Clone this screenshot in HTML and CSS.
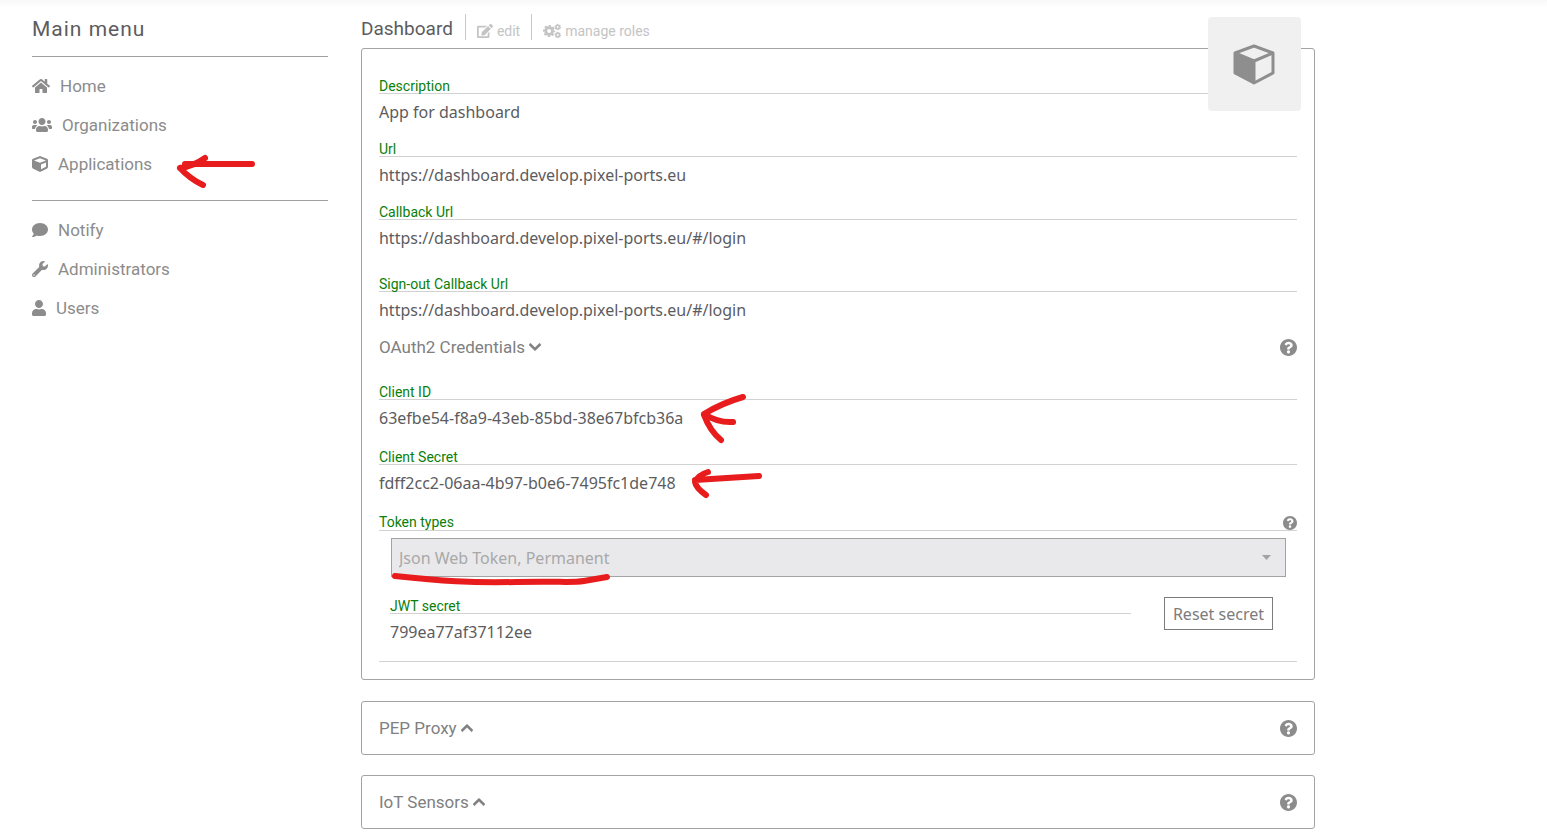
FILE: index.html
```html
<!DOCTYPE html>
<html lang="en">
<head>
<meta charset="utf-8">
<title>Dashboard</title>
<link rel="stylesheet" href="styles.css">
</head>
<body>
<svg class="sprite" aria-hidden="true">
  <symbol id="home" viewBox="0 0 576 512"><path d="M280.37 148.26L96 300.11V464a16 16 0 0 0 16 16l112.06-.29a16 16 0 0 0 15.92-16V368a16 16 0 0 1 16-16h64a16 16 0 0 1 16 16v95.64a16 16 0 0 0 16 16.05L464 480a16 16 0 0 0 16-16V300L295.67 148.26a12.19 12.19 0 0 0-15.3 0zM571.6 251.47L488 182.56V44.05a12 12 0 0 0-12-12h-56a12 12 0 0 0-12 12v72.61L318.47 43a48 48 0 0 0-61 0L4.34 251.47a12 12 0 0 0-1.6 16.9l25.5 31A12 12 0 0 0 45.15 301l235.22-193.74a12.19 12.19 0 0 1 15.3 0L530.9 301a12 12 0 0 0 16.9-1.6l25.5-31a12 12 0 0 0-1.7-16.93z"/></symbol>
  <symbol id="group" viewBox="0 0 640 512"><path d="M96 224c35.3 0 64-28.7 64-64s-28.7-64-64-64-64 28.7-64 64 28.7 64 64 64zm448 0c35.3 0 64-28.7 64-64s-28.7-64-64-64-64 28.7-64 64 28.7 64 64 64zm32 32h-64c-17.6 0-33.5 7.1-45.1 18.6 40.3 22.1 68.9 62 75.1 109.4h66c17.7 0 32-14.3 32-32v-32c0-35.3-28.7-64-64-64zm-256 0c61.9 0 112-50.1 112-112S381.9 32 320 32 208 82.1 208 144s50.1 112 112 112zm76.8 32h-8.3c-20.8 10-43.9 16-68.5 16s-47.6-6-68.5-16h-8.3C179.6 288 128 339.6 128 403.2V432c0 26.5 21.5 48 48 48h288c26.5 0 48-21.5 48-48v-28.8c0-63.6-51.6-115.2-115.2-115.2zm-223.7-13.4C161.5 263.1 145.6 256 128 256H64c-35.3 0-64 28.7-64 64v32c0 17.7 14.3 32 32 32h65.9c6.3-47.4 34.9-87.3 75.2-109.4z"/></symbol>
  <symbol id="cube" viewBox="0 0 512 512"><path d="M239.1 6.3l-208 78c-18.7 7-31.1 25-31.1 45v225.1c0 18.2 10.3 34.8 26.5 42.9l208 104c13.5 6.8 29.4 6.8 42.9 0l208-104c16.3-8.1 26.5-24.8 26.5-42.9V129.3c0-20-12.4-37.9-31.1-44.9l-208-78C262 2.2 250 2.2 239.1 6.3zM256 68.4l192 72v1.1l-192 78-192-78v-1.1l192-72zm32 356V275.5l160-65v133.9l-160 80z"/></symbol>
  <symbol id="comment" viewBox="0 0 512 512"><path d="M256 32C114.6 32 0 125.1 0 240c0 49.6 21.4 95 57 130.7C44.5 421.1 2.7 466 2.2 466.5c-2.2 2.3-2.8 5.7-1.5 8.7S4.8 480 8 480c66.3 0 116-31.8 140.6-51.4 32.7 12.3 69 19.4 107.4 19.4 141.4 0 256-93.1 256-208S397.4 32 256 32z"/></symbol>
  <symbol id="wrench" viewBox="0 0 512 512"><path d="M507.73 109.1c-2.24-9.03-13.54-12.09-20.12-5.51l-74.36 74.36-67.88-11.31-11.31-67.88 74.36-74.36c6.62-6.62 3.43-17.9-5.66-20.16-47.38-11.74-99.55.91-136.58 37.93-39.64 39.64-50.55 97.1-34.05 147.2L18.74 402.76c-24.99 24.99-24.99 65.51 0 90.5 24.99 24.99 65.51 24.99 90.5 0l213.21-213.21c50.12 16.71 107.47 5.68 147.37-34.22 37.07-37.07 49.7-89.32 37.91-136.73zM64 472c-13.25 0-24-10.75-24-24 0-13.26 10.75-24 24-24s24 10.74 24 24c0 13.25-10.75 24-24 24z"/></symbol>
  <symbol id="user" viewBox="0 0 448 512"><path d="M224 256c70.7 0 128-57.3 128-128S294.7 0 224 0 96 57.3 96 128s57.3 128 128 128zm89.6 32h-16.7c-22.2 10.2-46.9 16-72.9 16s-50.6-5.8-72.9-16h-16.7C60.2 288 0 348.2 0 422.4V464c0 26.5 21.5 48 48 48h352c26.5 0 48-21.5 48-48v-41.6c0-74.2-60.2-134.4-134.4-134.4z"/></symbol>
  <symbol id="help" viewBox="8 8 496 496"><path d="M504 256c0 136.997-111.043 248-248 248S8 392.997 8 256C8 119.083 119.043 8 256 8s248 111.083 248 248zM262.655 90c-54.497 0-89.255 22.957-116.549 63.758-3.536 5.286-2.353 12.415 2.715 16.258l34.699 26.31c5.205 3.947 12.621 3.008 16.665-2.122 17.864-22.658 30.113-35.797 57.303-35.797 20.429 0 45.698 13.148 45.698 32.958 0 14.976-12.363 22.667-32.534 33.976C247.128 238.528 216 254.941 216 296v4c0 6.627 5.373 12 12 12h56c6.627 0 12-5.373 12-12v-1.333c0-28.462 83.186-29.647 83.186-106.667 0-58.002-60.165-102-116.531-102zM256 338c-25.365 0-46 20.635-46 46 0 25.364 20.635 46 46 46s46-20.636 46-46c0-25.365-20.635-46-46-46z"/></symbol>
  <symbol id="edit" viewBox="0 0 576 512"><path d="M402.6 83.2l90.2 90.2c3.8 3.8 3.8 10 0 13.8L274.4 405.6l-92.8 10.3c-12.4 1.4-22.9-9.1-21.5-21.5l10.3-92.8L388.8 83.2c3.8-3.8 10-3.8 13.8 0zm162-22.9l-48.8-48.8c-15.2-15.2-39.9-15.2-55.2 0l-35.4 35.4c-3.8 3.8-3.8 10 0 13.8l90.2 90.2c3.8 3.8 10 3.8 13.8 0l35.4-35.4c15.2-15.3 15.2-40 0-55.2zM384 346.2V448H64V128h229.8c3.2 0 6.2-1.3 8.5-3.5l40-40c7.6-7.6 2.2-20.5-8.5-20.5H48C21.5 64 0 85.5 0 112v352c0 26.5 21.5 48 48 48h352c26.5 0 48-21.5 48-48V306.2c0-10.7-12.9-16-20.5-8.5l-40 40c-2.2 2.3-3.5 5.3-3.5 8.5z"/></symbol>
  <symbol id="chevron" viewBox="0 0 448 512"><path d="M207.029 381.476L12.686 187.132c-9.373-9.373-9.373-24.569 0-33.941l22.667-22.667c9.357-9.357 24.522-9.375 33.901-.04L224 284.505l154.745-154.021c9.379-9.335 24.544-9.317 33.901.04l22.667 22.667c9.373 9.373 9.373 24.569 0 33.941L240.971 381.476c-9.373 9.372-24.569 9.372-33.942 0z"/></symbol>
  <symbol id="cogs" viewBox="0 0 20 16"><g fill="none" stroke="currentColor"><circle cx="6.8" cy="8" r="3.8" stroke-width="3.2"/><circle cx="6.8" cy="8" r="5.8" stroke-width="2" stroke-dasharray="2.6 1.955" stroke-dashoffset="1.3"/><circle cx="16.4" cy="3.6" r="2" stroke-width="1.8"/><circle cx="16.4" cy="3.6" r="3" stroke-width="1.2" stroke-dasharray="1.57 1.57"/><circle cx="16.4" cy="12.4" r="2" stroke-width="1.8"/><circle cx="16.4" cy="12.4" r="3" stroke-width="1.2" stroke-dasharray="1.57 1.57"/></g></symbol>
</svg>

<div class="page">
  <nav class="sidebar" aria-label="Main menu">
    <h2 class="menu-title">Main menu</h2>
    <ul class="menu">
      <li><a href="#"><svg class="icon w18"><use href="#home"/></svg>Home</a></li>
      <li><a href="#"><svg class="icon w20"><use href="#group"/></svg>Organizations</a></li>
      <li class="marked"><a href="#"><svg class="icon w16"><use href="#cube"/></svg>Applications</a>
        <svg class="ink ink-menu" viewBox="0 0 80 36"><path d="M9 10H76M4 14Q18 12 29 4M4 14Q14 25 27 31"/></svg></li>
    </ul>
    <ul class="menu">
      <li><a href="#"><svg class="icon w16"><use href="#comment"/></svg>Notify</a></li>
      <li><a href="#"><svg class="icon w16"><use href="#wrench"/></svg>Administrators</a></li>
      <li><a href="#"><svg class="icon w14"><use href="#user"/></svg>Users</a></li>
    </ul>
  </nav>

  <main class="main">
    <header class="header">
      <h1 class="title">Dashboard</h1>
      <a class="action" href="#"><svg class="icon w16"><use href="#edit"/></svg>edit</a>
      <a class="action" href="#"><svg class="icon w18"><use href="#cogs"/></svg>manage roles</a>
    </header>

    <div class="avatar">
      <svg class="avatar-cube" viewBox="0 0 42 42"><path fill="#f0f0f0" stroke="#8e8e8e" stroke-width="3" stroke-linejoin="round" d="M21 3 40 10V30L21 40 2 30V10Z"/><path fill="#8e8e8e" d="M2 10 21 18V40L2 30Z"/><path fill="none" stroke="#8e8e8e" stroke-width="3" d="M2 10 21 18 40 10M21 18V40"/></svg>
    </div>

    <section class="card details">
      <dl class="fields">
        <div class="field"><dt>Description</dt><dd>App for dashboard</dd></div>
        <div class="field"><dt>Url</dt><dd>https://dashboard.develop.pixel-ports.eu</dd></div>
        <div class="field"><dt>Callback Url</dt><dd>https://dashboard.develop.pixel-ports.eu/#/login</dd></div>
        <div class="field spaced"><dt>Sign-out Callback Url</dt><dd>https://dashboard.develop.pixel-ports.eu/#/login</dd></div>
      </dl>

      <div class="section-head">
        <button class="toggle" type="button">OAuth2 Credentials<svg class="chevron"><use href="#chevron"/></svg></button>
        <button class="help" type="button" aria-label="Help"><svg><use href="#help"/></svg></button>
      </div>

      <dl class="fields credentials">
        <div class="field"><dt>Client ID</dt><dd><span class="marked">63efbe54-f8a9-43eb-85bd-38e67bfcb36a<svg class="ink ink-id" viewBox="0 0 48 52"><path d="M4 21Q22 10 43 4M4 21Q18 30 33 29M4 22Q10 38 21 47"/></svg></span></dd></div>
        <div class="field"><dt>Client Secret</dt><dd><span class="marked">fdff2cc2-06aa-4b97-b0e6-7495fc1de748<svg class="ink ink-secret" viewBox="0 0 74 32"><path d="M5 12Q20 11 69 8M18 4Q8 7 5 14Q6 20 16 27"/></svg></span></dd></div>
      </dl>

      <div class="token-label">
        <label for="token">Token types</label>
        <button class="help small" type="button" aria-label="Help"><svg><use href="#help"/></svg></button>
      </div>
      <div class="select-wrap">
        <select id="token" disabled><option>Json Web Token, Permanent</option></select>
        <svg class="caret" viewBox="0 0 9 5"><path d="M0 0h9L4.5 5z"/></svg>
        <svg class="ink ink-line" viewBox="0 0 220 14"><path d="M4 4C50 9 80 11 125 10S180 11 193 9L216 5"/></svg>
      </div>
      <div class="jwt">
        <dl class="fields"><div class="field"><dt>JWT secret</dt><dd>799ea77af37112ee</dd></div></dl>
        <button class="reset" type="button">Reset secret</button>
      </div>
    </section>

    <section class="card section-head folded">
      <button class="toggle" type="button">PEP Proxy<svg class="chevron up"><use href="#chevron"/></svg></button>
      <button class="help" type="button" aria-label="Help"><svg><use href="#help"/></svg></button>
    </section>
    <section class="card section-head folded">
      <button class="toggle" type="button">IoT Sensors<svg class="chevron up"><use href="#chevron"/></svg></button>
      <button class="help" type="button" aria-label="Help"><svg><use href="#help"/></svg></button>
    </section>
  </main>
</div>
</body>
</html>
```

FILE: styles.css
```css
* { box-sizing: border-box; }

body {
  margin: 0;
  background: #fff linear-gradient(#f8f8f8, #fff) no-repeat 0 0 / 100% 8px;
  color: #5c5c60;
  font: 16px/20px "Noto Sans", sans-serif;
}

svg { display: block; fill: currentColor; }
.sprite { position: absolute; width: 0; height: 0; }
h1, h2, ul, dl, dd { margin: 0; padding: 0; font-weight: 400; }
a { color: inherit; text-decoration: none; }
button { padding: 0; border: 0; background: none; color: inherit; font: inherit; }

.page {
  display: grid;
  grid-template-columns: 296fr 954fr;
  gap: 33px;
  padding: 0 15% 8px 32px;
}

.menu-title {
  padding: 15px 0 13px;
  font: 400 21px/28px Roboto, sans-serif;
  letter-spacing: 1px;
}

.menu {
  display: grid;
  gap: 19px;
  margin-bottom: 26px;
  padding-top: 19px;
  border-top: 1px solid #a0a0a0;
  color: #8c8c8c;
  font: 400 17px/20px Roboto, sans-serif;
  list-style: none;
}
.menu a { display: flex; align-items: center; gap: 10px; width: fit-content; }

.icon { height: 16px; }
.w14 { width: 14px; }
.w16 { width: 16px; }
.w18 { width: 18px; }
.w20 { width: 20px; }

.main { position: relative; min-width: 0; }

.header { display: flex; align-items: center; height: 48px; padding: 13px 0 8px; font-family: Roboto, sans-serif; }
.title { padding-top: 4px; font-size: 19px; line-height: 24px; margin-right: 12px; }
.action {
  display: flex;
  align-items: center;
  gap: 4px;
  height: 26px;
  padding: 8px 11px 0 11px;
  border-left: 1px solid #c8c8c8;
  color: #c4c4c4;
  font-size: 14px;
}

.avatar {
  position: absolute;
  top: 17px;
  right: 14px;
  display: grid;
  place-items: center;
  width: 93px;
  height: 94px;
  border-radius: 4px;
  background: #f0f0f0;
}
.avatar-cube { width: 42px; height: 42px; }

.card { border: 1px solid #a3a3a3; border-radius: 3px; }
.details { padding: 29px 17px 17px; }

.fields { display: grid; gap: 19px; }
dt, .token-label {
  height: 16px;
  border-bottom: 1px solid #d2d2d2;
  color: #0a800a;
  font: 400 14px/17px Roboto, sans-serif;
}
dd { margin-top: 8px; }
.spaced { margin-top: 9px; }

.section-head { display: flex; align-items: center; justify-content: space-between; }
.details .section-head { margin: 17px 0 27px; }
.toggle { display: flex; align-items: center; gap: 4px; color: #808080; font: 400 17px/20px Roboto, sans-serif; }
.chevron { width: 12px; height: 14px; stroke: currentColor; stroke-width: 24px; }
.up { transform: rotate(180deg); }
.help { color: #8c8c8c; }
.help svg { width: 17px; height: 17px; }
.help.small svg { width: 14px; height: 14px; }

.credentials { gap: 21px; margin-bottom: 22px; }
.token-label { display: flex; align-items: center; justify-content: space-between; }

.select-wrap { position: relative; margin: 7px 11px 0 12px; }
.select-wrap select {
  display: block;
  width: 100%;
  height: 39px;
  padding: 0 7px;
  border: 1px solid #a3a3a3;
  border-radius: 0;
  background: #e9e9eb;
  color: #a8a8a8;
  font: inherit;
  opacity: 1;
  appearance: none;
}
.caret { position: absolute; top: 17px; right: 15px; width: 9px; height: 5px; color: #a3a3a3; }

.jwt {
  display: flex;
  align-items: flex-start;
  gap: 33px;
  padding: 20px 24px 19px 11px;
  border-bottom: 1px solid #d2d2d2;
}
.jwt .fields { flex: 1; padding-top: 1px; }
.reset { width: 109px; height: 33px; border: 1px solid #7c7c7c; color: #7c7c7c; }

.folded { margin-top: 21px; height: 54px; padding: 0 17px; }
.folded + .folded { margin-top: 20px; }

.marked { position: relative; }
.ink { position: absolute; fill: none; stroke: #e81c1c; stroke-width: 6px; stroke-linecap: round; stroke-linejoin: round; }
.ink-menu { left: 144px; top: 0; width: 80px; height: 36px; }
.ink-id { left: 100%; top: -14px; width: 48px; height: 52px; margin-left: 17px; }
.ink-secret { left: 100%; top: -4px; width: 74px; height: 32px; margin-left: 14px; }
.ink-line { left: 0; top: 34px; width: 220px; height: 14px; }
```
